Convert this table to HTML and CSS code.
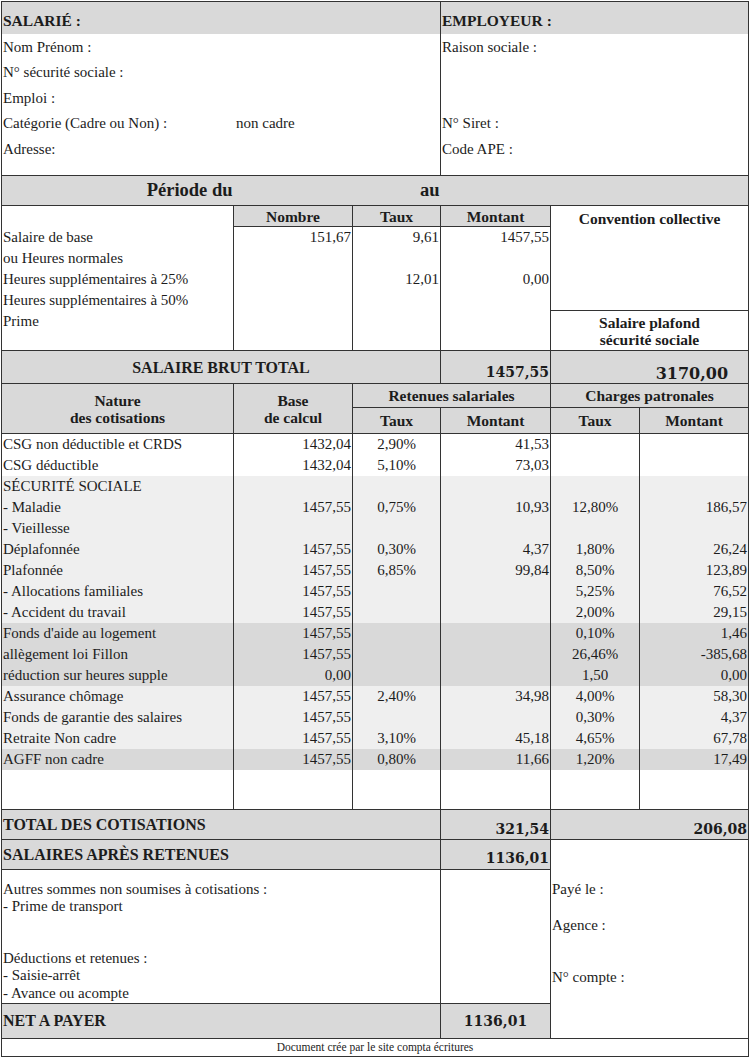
FILE: index.html
```html
<!DOCTYPE html>
<html lang="fr">
<head>
<meta charset="utf-8">
<title>Bulletin de paie</title>
<link rel="stylesheet" href="styles.css">
</head>
<body>
<div class="sheet">
<table class="pay">
  <colgroup>
    <col class="c1"><col class="c2"><col class="c3"><col class="c4"><col class="c5"><col class="c6">
  </colgroup>
  <tr class="r-head">
    <td colspan="3" class="g sec-title nbb">SALARIÉ :</td>
    <td colspan="3" class="g sec-title nbb">EMPLOYEUR :</td>
  </tr>
  <tr class="r-info">
    <td colspan="3" class="info nbt">
      <div class="iline">Nom Prénom :</div>
      <div class="iline">N° sécurité sociale :</div>
      <div class="iline">Emploi :</div>
      <div class="iline"><span class="ilabel">Catégorie (Cadre ou Non) :</span>non cadre</div>
      <div class="iline">Adresse:</div>
    </td>
    <td colspan="3" class="info nbt">
      <div class="iline">Raison sociale :</div>
      <div class="iline"></div>
      <div class="iline"></div>
      <div class="iline">N° Siret :</div>
      <div class="iline">Code APE :</div>
    </td>
  </tr>
  <tr class="r-period">
    <td class="g b17 right nbr">Période du</td>
    <td class="g nbl nbr"></td>
    <td class="g b17 right nbl nbr">au</td>
    <td colspan="3" class="g nbl"></td>
  </tr>
  <tr class="r-colhead">
    <td rowspan="3" class="top lines-cell pad-first">
      <div class="dline">Salaire de base</div>
      <div class="dline">ou Heures normales</div>
      <div class="dline">Heures supplémentaires à 25%</div>
      <div class="dline">Heures supplémentaires à 50%</div>
      <div class="dline">Prime</div>
    </td>
    <td class="g hb center">Nombre</td>
    <td class="g hb center">Taux</td>
    <td class="g hb center">Montant</td>
    <td colspan="2" rowspan="2" class="top hb center conv">Convention collective</td>
  </tr>
  <tr class="r-lines">
    <td rowspan="2" class="top right lines-cell">
      <div class="dline">151,67</div>
    </td>
    <td rowspan="2" class="top right lines-cell">
      <div class="dline">9,61</div>
      <div class="dline"></div>
      <div class="dline">12,01</div>
    </td>
    <td rowspan="2" class="top right lines-cell">
      <div class="dline">1457,55</div>
      <div class="dline"></div>
      <div class="dline">0,00</div>
    </td>
  </tr>
  <tr class="r-plafond">
    <td colspan="2" class="hb center two">Salaire plafond<br>sécurité sociale</td>
  </tr>
  <tr class="r-brut">
    <td colspan="3" class="g b16 center">SALAIRE BRUT TOTAL</td>
    <td class="g num-b right bottom pb2">1457,55</td>
    <td colspan="2" class="g num-b big right bottom pr20">3170,00</td>
  </tr>
  <tr class="r-cothead1">
    <td rowspan="2" class="g hb center two">Nature<br>des cotisations</td>
    <td rowspan="2" class="g hb center two">Base<br>de calcul</td>
    <td colspan="2" class="g hb center">Retenues salariales</td>
    <td colspan="2" class="g hb center">Charges patronales</td>
  </tr>
  <tr class="r-cothead2">
    <td class="g hb center">Taux</td>
    <td class="g hb center">Montant</td>
    <td class="g hb center">Taux</td>
    <td class="g hb center">Montant</td>
  </tr>
  <tr class="dr"><td>CSG non déductible et CRDS</td><td class="right">1432,04</td><td class="center">2,90%</td><td class="right">41,53</td><td class="center"></td><td class="right"></td></tr>
  <tr class="dr"><td>CSG déductible</td><td class="right">1432,04</td><td class="center">5,10%</td><td class="right">73,03</td><td class="center"></td><td class="right"></td></tr>
  <tr class="dr l"><td>SÉCURITÉ SOCIALE</td><td class="right"></td><td class="center"></td><td class="right"></td><td class="center"></td><td class="right"></td></tr>
  <tr class="dr l"><td>- Maladie</td><td class="right">1457,55</td><td class="center">0,75%</td><td class="right">10,93</td><td class="center">12,80%</td><td class="right">186,57</td></tr>
  <tr class="dr l"><td>- Vieillesse</td><td class="right"></td><td class="center"></td><td class="right"></td><td class="center"></td><td class="right"></td></tr>
  <tr class="dr l"><td>Déplafonnée</td><td class="right">1457,55</td><td class="center">0,30%</td><td class="right">4,37</td><td class="center">1,80%</td><td class="right">26,24</td></tr>
  <tr class="dr l"><td>Plafonnée</td><td class="right">1457,55</td><td class="center">6,85%</td><td class="right">99,84</td><td class="center">8,50%</td><td class="right">123,89</td></tr>
  <tr class="dr l"><td>- Allocations familiales</td><td class="right">1457,55</td><td class="center"></td><td class="right"></td><td class="center">5,25%</td><td class="right">76,52</td></tr>
  <tr class="dr l"><td>- Accident du travail</td><td class="right">1457,55</td><td class="center"></td><td class="right"></td><td class="center">2,00%</td><td class="right">29,15</td></tr>
  <tr class="dr d"><td>Fonds d'aide au logement</td><td class="right">1457,55</td><td class="center"></td><td class="right"></td><td class="center">0,10%</td><td class="right">1,46</td></tr>
  <tr class="dr d"><td>allègement loi Fillon</td><td class="right">1457,55</td><td class="center"></td><td class="right"></td><td class="center">26,46%</td><td class="right">-385,68</td></tr>
  <tr class="dr d"><td>réduction sur heures supple</td><td class="right">0,00</td><td class="center"></td><td class="right"></td><td class="center">1,50</td><td class="right">0,00</td></tr>
  <tr class="dr l"><td>Assurance chômage</td><td class="right">1457,55</td><td class="center">2,40%</td><td class="right">34,98</td><td class="center">4,00%</td><td class="right">58,30</td></tr>
  <tr class="dr l"><td>Fonds de garantie des salaires</td><td class="right">1457,55</td><td class="center"></td><td class="right"></td><td class="center">0,30%</td><td class="right">4,37</td></tr>
  <tr class="dr l"><td>Retraite Non cadre</td><td class="right">1457,55</td><td class="center">3,10%</td><td class="right">45,18</td><td class="center">4,65%</td><td class="right">67,78</td></tr>
  <tr class="dr d"><td>AGFF non cadre</td><td class="right">1457,55</td><td class="center">0,80%</td><td class="right">11,66</td><td class="center">1,20%</td><td class="right">17,49</td></tr>
  <tr class="dr blank"><td></td><td></td><td></td><td></td><td></td><td></td></tr>
  <tr class="r-total">
    <td colspan="3" class="g b16 bottom pb4">TOTAL DES COTISATIONS</td>
    <td class="g num-b right bottom pb1">321,54</td>
    <td colspan="2" class="g num-b right bottom pb1">206,08</td>
  </tr>
  <tr class="r-net1">
    <td colspan="3" class="g b16 bottom pb4">SALAIRES APRÈS RETENUES</td>
    <td class="g num-b right bottom pb2">1136,01</td>
    <td colspan="2" rowspan="3" class="top pay-info">
      <div class="pline">Payé le :</div>
      <div class="pline gap1">Agence :</div>
      <div class="pline gap2">N° compte :</div>
    </td>
  </tr>
  <tr class="r-other">
    <td colspan="3" class="top other">
      <div class="oline">Autres sommes non soumises à cotisations :</div>
      <div class="oline">- Prime de transport</div>
      <div class="oline"></div>
      <div class="oline"></div>
      <div class="oline">Déductions et retenues :</div>
      <div class="oline">- Saisie-arrêt</div>
      <div class="oline">- Avance ou acompte</div>
    </td>
    <td></td>
  </tr>
  <tr class="r-net">
    <td colspan="3" class="g b16">NET A PAYER</td>
    <td class="g num-b center">1136,01</td>
  </tr>
  <tr class="r-foot">
    <td colspan="6" class="center foot">Document crée par le site compta écritures</td>
  </tr>
</table>
</div>
</body>
</html>
```

FILE: styles.css
```css
* { box-sizing: border-box; }

body {
  margin: 0;
  background: #ffffff;
  color: #1c1c1c;
  font-family: "Liberation Serif", "Times New Roman", serif;
}

.sheet {
  padding: 1px 0 0 1px;
}

.pay {
  border-collapse: collapse;
  table-layout: fixed;
  width: 747px;
}

.pay .c1 { width: 232px; }
.pay .c2 { width: 119px; }
.pay .c3 { width: 88px; }
.pay .c4 { width: 110px; }
.pay .c5 { width: 89px; }
.pay .c6 { width: 109px; }

.pay td {
  border: 1px solid #333333;
  padding: 0 1px;
  font-size: 15px;
  line-height: 21px;
  vertical-align: middle;
  white-space: nowrap;
  overflow: hidden;
}

/* backgrounds */
.pay td.g { background: #d9d9d9; }
.pay tr.l td { background: #efefef; }
.pay tr.d td { background: #d9d9d9; }

/* border suppression */
.pay td.nbb { border-bottom: none; }
.pay td.nbt { border-top: none; }
.pay td.nbl { border-left: none; }
.pay td.nbr { border-right: none; }

/* alignment */
.pay td.right { text-align: right; }
.pay td.center { text-align: center; }
.pay td.top { vertical-align: top; }
.pay td.bottom { vertical-align: bottom; }

/* row heights */
.r-head { height: 32px; }
.r-info { height: 142px; }
.r-period { height: 30px; }
.r-colhead { height: 21px; }
.r-lines { height: 84px; }
.r-plafond { height: 40px; }
.r-brut { height: 33px; }
.r-cothead1 { height: 24px; }
.r-cothead2 { height: 26px; }
.dr { height: 21px; }
.dr.blank { height: 39px; }
.r-total { height: 30px; }
.r-net1 { height: 30px; }
.r-other { height: 134px; }
.r-net { height: 35px; }
.r-foot { height: 18px; }

/* data rows: no horizontal rules between them */
.pay tr.dr td {
  border-top: none;
  border-bottom: none;
  line-height: 21px;
}
.pay tr.dr.blank td { border-bottom: 1px solid #333333; }

/* top section */
.pay td.sec-title {
  font-weight: bold;
  font-size: 15.5px;
  vertical-align: bottom;
  padding: 0 1px 3px;
}

.pay td.info {
  vertical-align: top;
  padding: 1px 1px 0;
  font-size: 15px;
}

.iline {
  height: 25.5px;
  line-height: 25.5px;
}

.ilabel {
  display: inline-block;
  width: 233px;
}

/* headers */
.pay td.b17 { font-weight: bold; font-size: 18.5px; }
.pay td.b16 { font-weight: bold; font-size: 16px; }
.pay td.hb { font-weight: bold; font-size: 15.5px; line-height: 17px; }
.pay td.conv { padding-top: 4px; }
.pay td.two { line-height: 17px; }

.pay td.pad-first { padding-top: 21px; }

.dline {
  height: 21px;
  line-height: 21px;
}

/* bold numbers */
.pay td.num-b {
  font-family: "DejaVu Serif", "Liberation Serif", serif;
  font-weight: bold;
  font-size: 14px;
  line-height: 18px;
}
.pay td.num-b.big { font-size: 16px; }
.pay td.pb1 { padding-bottom: 1px; }
.pay td.pb2 { padding-bottom: 2px; }
.pay td.pb4 { padding-bottom: 4px; }
.pay td.pr20 { padding-right: 20px; }

/* lower block */
.pay td.other {
  font-size: 15px;
  padding-top: 11px;
}

.oline {
  height: 17.4px;
  line-height: 17.4px;
}

.pay td.pay-info {
  font-size: 15px;
  padding-top: 41px;
}

.pline { line-height: 17.4px; }
.pline.gap1 { margin-top: 18.6px; }
.pline.gap2 { margin-top: 34.6px; }

.pay td.foot {
  font-size: 11.5px;
  line-height: 14px;
}
```
